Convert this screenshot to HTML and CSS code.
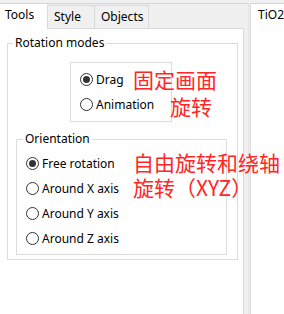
FILE: index.html
```html
<!DOCTYPE html>
<html lang="en">
<head>
<meta charset="utf-8">
<title>Tools</title>
<link rel="stylesheet" href="styles.css">
</head>
<body>
<div class="window">
  <div class="dock">
    <div class="tabbar">
      <div class="tab active">Tools</div>
      <div class="tab style">Style</div>
      <div class="tab objects">Objects</div>
    </div>
    <div class="pane">
      <fieldset class="group rotation">
        <legend>Rotation modes</legend>
        <div class="modebox">
          <div class="radio"><span class="dot checked"></span><span>Drag</span></div>
          <div class="radio"><span class="dot"></span><span>Animation</span></div>
        </div>
        <fieldset class="group orientation">
          <legend>Orientation</legend>
          <div class="rows">
            <div class="radio"><span class="dot checked"></span><span>Free rotation</span></div>
            <div class="radio"><span class="dot"></span><span>Around X axis</span></div>
            <div class="radio"><span class="dot"></span><span>Around Y axis</span></div>
            <div class="radio"><span class="dot"></span><span>Around Z axis</span></div>
          </div>
        </fieldset>
      </fieldset>
    </div>
  </div>
  <div class="side">
    <div class="side-title">TiO2</div>
  </div>
  <div class="note note-a">
    <div>固定画面</div>
    <div class="indent">旋转</div>
  </div>
  <div class="note note-b">
    <div>自由旋转和绕轴</div>
    <div>旋转（XYZ）</div>
  </div>
</div>
</body>
</html>
```

FILE: styles.css
```css
html, body {
  margin: 0;
  padding: 0;
}
body {
  background: #f0f0f0;
  font-family: "Noto Sans", "Open Sans", "Noto Sans CJK SC", sans-serif;
  font-size: 12px;
  color: #000;
  overflow: hidden;
}
.window {
  position: relative;
  display: flex;
  height: 314px;
  padding-top: 3px;
  box-sizing: border-box;
}
.dock {
  width: 249px;
  flex: none;
  display: flex;
  flex-direction: column;
  border-top: 1px solid #d6d6d6;
  border-right: 1px solid #e4e4e4;
  box-sizing: border-box;
}
.tabbar {
  height: 24px;
  display: flex;
  align-items: flex-end;
  flex: none;
}
.tab {
  box-sizing: border-box;
  height: 23px;
  line-height: 22px;
  padding-left: 6px;
  border-top: 1px solid #d9d9d9;
  border-left: 1px solid #d9d9d9;
  background: #f0f0f0;
}
.tab.active {
  position: relative;
  width: 47px;
  height: 25px;
  line-height: 22px;
  margin-bottom: -1px;
  padding-left: 5px;
  border: none;
  background: #fff;
}
.tab.style {
  width: 47px;
}
.tab.objects {
  width: 55px;
  border-right: 1px solid #d9d9d9;
}
.pane {
  flex: 1;
  width: 244px;
  box-sizing: border-box;
  background: #fff;
  border-top: 1px solid #d9d9d9;
  border-right: 1px solid #d9d9d9;
  padding-top: 6px;
}
.group {
  margin: 0;
  padding: 0;
  min-inline-size: 0;
  border: 1px solid #dcdcdc;
  box-sizing: border-box;
}
.group legend {
  padding: 0 2px;
  line-height: 16px;
  height: 16px;
}
.rotation {
  margin-left: 7px;
  width: 231px;
  padding-bottom: 4px;
}
.rotation > legend {
  margin-left: 5px;
}
.modebox {
  margin: 11px 0 0 62px;
  width: 102px;
  height: 60px;
  box-sizing: border-box;
  border: 1px solid #dcdcdc;
  padding: 4px 0 4px 9px;
}
.orientation {
  margin: 9px 0 0 8px;
  width: 211px;
  padding-bottom: 3px;
}
.orientation > legend {
  margin-left: 6px;
}
.rows {
  padding: 4px 0 0 9px;
}
.radio {
  display: flex;
  align-items: center;
  gap: 3px;
  height: 25px;
  white-space: nowrap;
}
.dot {
  width: 13px;
  height: 13px;
  box-sizing: border-box;
  border: 1px solid #333;
  border-radius: 50%;
  background: #fff;
  display: grid;
  place-items: center;
  flex: none;
}
.dot.checked::after {
  content: "";
  width: 7px;
  height: 7px;
  border-radius: 50%;
  background: #333;
}
.side {
  flex: 1;
  margin-left: 1px;
  background: #fff;
  border-top: 1px solid #d6d6d6;
  border-left: 1px solid #d9d9d9;
}
.side-title {
  padding: 3px 0 0 7px;
  line-height: 16px;
}
.note {
  position: absolute;
  left: 133px;
  color: #ff2626;
  font-family: "Noto Sans CJK SC", sans-serif;
  font-size: 21px;
  white-space: nowrap;
}
.note-a {
  top: 66px;
  line-height: 27px;
}
.note-a .indent {
  padding-left: 37px;
}
.note-b {
  top: 150px;
  line-height: 25px;
}
```
